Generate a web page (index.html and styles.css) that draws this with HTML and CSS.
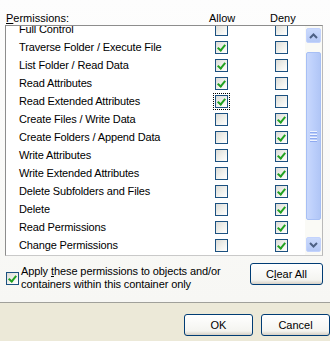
FILE: index.html
```html
<!DOCTYPE html>
<html>
<head>
<meta charset="utf-8">
<link rel="stylesheet" href="styles.css">
</head>
<body>
<div class="page">
  <div class="tab">
    <div class="heads">
      <span class="h-perm"><u>P</u>ermissions:</span>
      <span class="h-allow">Allow</span>
      <span class="h-deny">Deny</span>
    </div>
    <div class="listbox">
      <div class="viewport">
        <div class="rows">
          <div class="row"><span class="label">Full Control</span><span class="cb"></span><span class="cb"></span></div>
          <div class="row"><span class="label">Traverse Folder / Execute File</span><span class="cb on"></span><span class="cb"></span></div>
          <div class="row"><span class="label">List Folder / Read Data</span><span class="cb on"></span><span class="cb"></span></div>
          <div class="row"><span class="label">Read Attributes</span><span class="cb on"></span><span class="cb"></span></div>
          <div class="row"><span class="label">Read Extended Attributes</span><span class="cb on focus"></span><span class="cb"></span></div>
          <div class="row"><span class="label">Create Files / Write Data</span><span class="cb"></span><span class="cb on"></span></div>
          <div class="row"><span class="label">Create Folders / Append Data</span><span class="cb"></span><span class="cb on"></span></div>
          <div class="row"><span class="label">Write Attributes</span><span class="cb"></span><span class="cb on"></span></div>
          <div class="row"><span class="label">Write Extended Attributes</span><span class="cb"></span><span class="cb on"></span></div>
          <div class="row"><span class="label">Delete Subfolders and Files</span><span class="cb"></span><span class="cb on"></span></div>
          <div class="row"><span class="label">Delete</span><span class="cb"></span><span class="cb on"></span></div>
          <div class="row"><span class="label">Read Permissions</span><span class="cb"></span><span class="cb on"></span></div>
          <div class="row"><span class="label">Change Permissions</span><span class="cb"></span><span class="cb on"></span></div>
        </div>
      </div>
      <div class="scrollbar">
        <div class="sbtn">
          <svg width="9" height="6" viewBox="0 0 9 6"><path d="M1 5 L4.5 1.5 L8 5" fill="none" stroke="#4d6185" stroke-width="2"/></svg>
        </div>
        <div class="track-gap-top"></div>
        <div class="thumb">
          <div class="grip"><i></i><i></i><i></i><i></i></div>
        </div>
        <div class="track-gap-bottom"></div>
        <div class="sbtn">
          <svg width="9" height="6" viewBox="0 0 9 6"><path d="M1 1 L4.5 4.5 L8 1" fill="none" stroke="#4d6185" stroke-width="2"/></svg>
        </div>
      </div>
    </div>
    <div class="apply-row">
      <div class="apply">
        <span class="cb on"></span>
        <span class="apply-text">Apply <u>t</u>hese permissions to objects and/or<br>containers within this container only</span>
      </div>
      <button class="btn clear">C<u>l</u>ear All</button>
    </div>
  </div>
  <div class="footer">
    <button class="btn">OK</button>
    <button class="btn">Cancel</button>
  </div>
</div>
</body>
</html>
```
FILE: styles.css
```css
html, body {
  margin: 0;
  padding: 0;
}
body {
  width: 330px;
  height: 341px;
  overflow: hidden;
  background: #ece9d8;
  font-family: "Liberation Sans", Arial, sans-serif;
  font-size: 11px;
  color: #000;
}
.page {
  display: flex;
  flex-direction: column;
  height: 341px;
}
.tab {
  height: 303px;
  background: linear-gradient(#fdfdfd, #f7f7f4);
  border-bottom: 1px solid #a0a09a;
  box-sizing: border-box;
  padding: 10px 0 0 5px;
}
.heads {
  display: flex;
  height: 15px;
  align-items: center;
}
.h-perm {
  width: 203px;
  padding-left: 1px;
}
.h-allow {
  width: 61px;
}
.h-deny {
  width: 40px;
}
.listbox {
  width: 318px;
  height: 231px;
  border: 1px solid #8d8d8d;
  border-right-color: #b9b9b9;
  border-bottom-color: #c9c9c9;
  box-sizing: border-box;
  background: #fff;
  display: flex;
}
.viewport {
  flex: 1;
  overflow: hidden;
}
.rows {
  margin-top: -6px;
}
.row {
  display: flex;
  align-items: center;
  height: 18px;
}
.label {
  width: 196px;
  padding-left: 13px;
  white-space: nowrap;
  letter-spacing: -0.15px;
}
.cb {
  width: 13px;
  height: 13px;
  box-sizing: border-box;
  border: 1px solid #1c5180;
  background: linear-gradient(135deg, #dcdcd7 0%, #f3f3ef 60%, #fff 100%);
  position: relative;
  flex: none;
}
.row .cb + .cb {
  margin-left: 47px;
}
.cb.on::after {
  content: "";
  position: absolute;
  left: 3px;
  top: 1px;
  width: 3px;
  height: 6px;
  border: solid #21a121;
  border-width: 0 2px 2px 0;
  transform: rotate(40deg);
}
.cb.focus {
  outline: 1px dotted #000;
  outline-offset: 1px;
}
.scrollbar {
  width: 17px;
  background: #fafaf6;
  display: flex;
  flex-direction: column;
  align-items: center;
  padding: 2px 0;
  box-sizing: border-box;
}
.sbtn {
  width: 15px;
  height: 15px;
  box-sizing: border-box;
  border: 1px solid #c3d3fd;
  border-radius: 2px;
  background: linear-gradient(#cbdafc, #b4c8f6);
  display: flex;
  align-items: center;
  justify-content: center;
}
.track-gap-top {
  height: 9px;
}
.track-gap-bottom {
  height: 17px;
}
.thumb {
  width: 15px;
  height: 168px;
  box-sizing: border-box;
  border: 1px solid #a7bff5;
  border-radius: 2px;
  background: linear-gradient(90deg, #c9d8fc, #bccffb 50%, #b1c6f6);
  display: flex;
  align-items: center;
  justify-content: center;
}
.grip {
  display: flex;
  flex-direction: column;
  gap: 1px;
}
.grip i {
  display: block;
  width: 7px;
  height: 1px;
  background: #eef3fe;
  border-bottom: 1px solid #8faaf0;
}
.apply-row {
  display: flex;
  align-items: flex-start;
  margin-top: 6px;
  width: 318px;
  justify-content: space-between;
}
.apply {
  display: flex;
  align-items: center;
  padding-top: 3px;
  padding-left: 1px;
}
.apply .cb {
  margin-right: 2px;
}
.apply-text {
  line-height: 13px;
  letter-spacing: -0.1px;
}
.btn {
  font-family: "Liberation Sans", Arial, sans-serif;
  font-size: 11px;
  color: #000;
  height: 22px;
  width: 73px;
  border: 1px solid #003c74;
  border-radius: 3px;
  background: linear-gradient(#ffffff, #f4f4f0 80%, #d6d0c5);
  padding: 0;
  margin: 0;
}
.clear {
  margin-top: 1px;
}
.footer {
  display: flex;
  gap: 8px;
  padding: 11px 0 0 184px;
}
```
